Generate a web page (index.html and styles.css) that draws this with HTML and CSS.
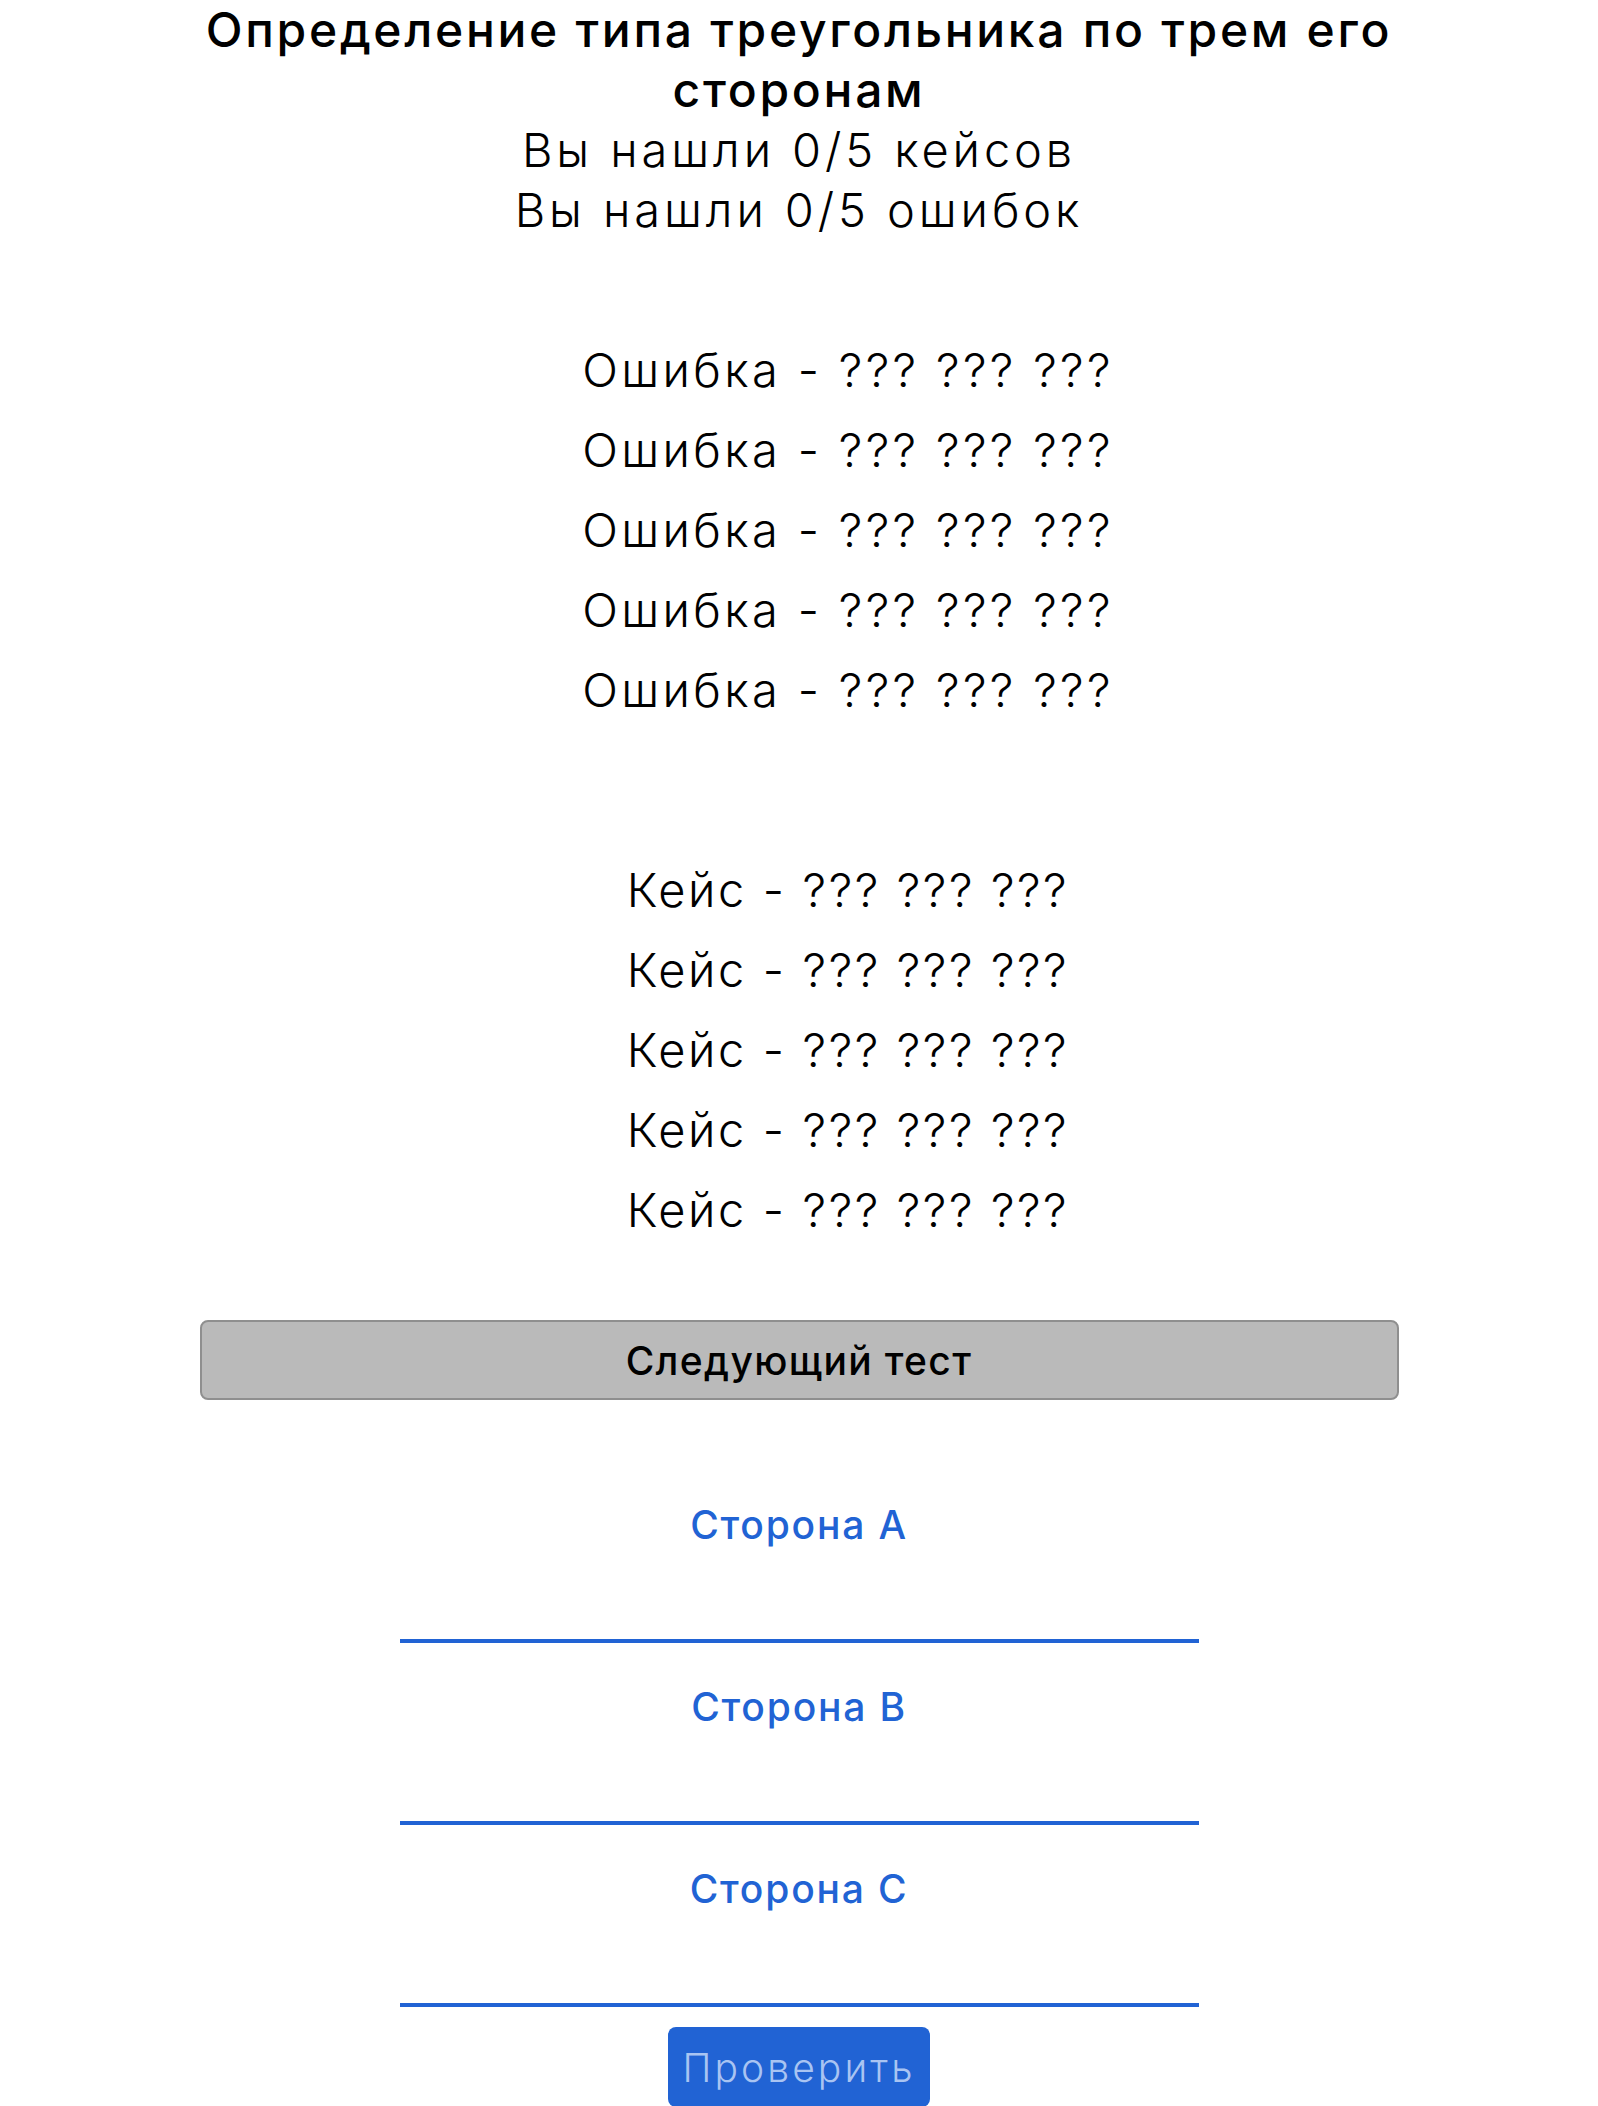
FILE: index.html
```html
<!DOCTYPE html>
<html lang="ru">
<head>
<meta charset="utf-8">
<title>Определение типа треугольника</title>
<link rel="stylesheet" href="styles.css">
</head>
<body>
<div class="page">
  <header class="header">
    <h1 class="title">Определение типа треугольника по трем его<br>сторонам</h1>
    <div class="counter">Вы нашли 0/5 кейсов</div>
    <div class="counter">Вы нашли 0/5 ошибок</div>
  </header>

  <ul class="list list-errors">
    <li class="item">Ошибка - ??? ??? ???</li>
    <li class="item">Ошибка - ??? ??? ???</li>
    <li class="item">Ошибка - ??? ??? ???</li>
    <li class="item">Ошибка - ??? ??? ???</li>
    <li class="item">Ошибка - ??? ??? ???</li>
  </ul>

  <ul class="list list-cases">
    <li class="item">Кейс - ??? ??? ???</li>
    <li class="item">Кейс - ??? ??? ???</li>
    <li class="item">Кейс - ??? ??? ???</li>
    <li class="item">Кейс - ??? ??? ???</li>
    <li class="item">Кейс - ??? ??? ???</li>
  </ul>

  <button class="next-btn" type="button">Следующий тест</button>

  <form class="form">
    <div class="field">
      <label class="field-label" for="a">Сторона A</label>
      <input class="field-input" id="a" type="text">
    </div>
    <div class="field">
      <label class="field-label" for="b">Сторона B</label>
      <input class="field-input" id="b" type="text">
    </div>
    <div class="field">
      <label class="field-label" for="c">Сторона C</label>
      <input class="field-input" id="c" type="text">
    </div>
    <button class="check-btn" type="button">Проверить</button>
  </form>
</div>
</body>
</html>
```

FILE: styles.css
```css
* { box-sizing: border-box; }

html, body {
  margin: 0;
  padding: 0;
  background: #ffffff;
}

body {
  font-family: Inter, "Noto Sans", "DejaVu Sans", sans-serif;
  color: #000000;
}

.page {
  width: 1200px;
  margin: 0 auto;
  display: flex;
  flex-direction: column;
  align-items: center;
}

.header {
  width: 100%;
  text-align: center;
}

.title {
  margin: 0;
  font-size: 48px;
  line-height: 60px;
  font-weight: 500;
  letter-spacing: 2.7px;
}

.counter {
  font-size: 47px;
  line-height: 60px;
  font-weight: 300;
  letter-spacing: 3.9px;
}

.list {
  list-style: none;
  margin: 0;
  padding: 0 0 0 98px;
  width: 100%;
  display: flex;
  flex-direction: column;
  align-items: center;
  gap: 20px;
}

.list-errors { margin-top: 100px; }
.list-cases { margin-top: 140px; }

.item {
  font-size: 47px;
  line-height: 60px;
  font-weight: 300;
}

.list-errors .item { letter-spacing: 3.35px; }
.list-cases .item { letter-spacing: 2.6px; }

.next-btn {
  margin-top: 80px;
  width: 1199px;
  height: 80px;
  background: #bababa;
  border: 2px solid #8f8f8f;
  border-radius: 8px;
  font-family: inherit;
  font-size: 39px;
  font-weight: 500;
  letter-spacing: 1.35px;
  color: #000000;
  padding: 0;
}

.form {
  margin-top: 101px;
  display: flex;
  flex-direction: column;
  align-items: center;
  gap: 40px;
  width: 100%;
}

.field {
  display: flex;
  flex-direction: column;
  align-items: center;
}

.field-label {
  font-size: 39px;
  line-height: 48px;
  font-weight: 500;
  letter-spacing: 1.8px;
  color: #2163d4;
}

.field-input {
  width: 799px;
  height: 94px;
  border: none;
  border-bottom: 4px solid #2163d4;
  background: transparent;
  outline: none;
  font-family: inherit;
  font-size: 39px;
  text-align: center;
}

.check-btn {
  margin-top: -20px;
  width: 262px;
  height: 80px;
  background: #2163d4;
  color: #a9c4f2;
  border: none;
  border-radius: 8px;
  font-family: inherit;
  font-size: 39px;
  font-weight: 300;
  letter-spacing: 3.1px;
  padding: 0;
}
```
